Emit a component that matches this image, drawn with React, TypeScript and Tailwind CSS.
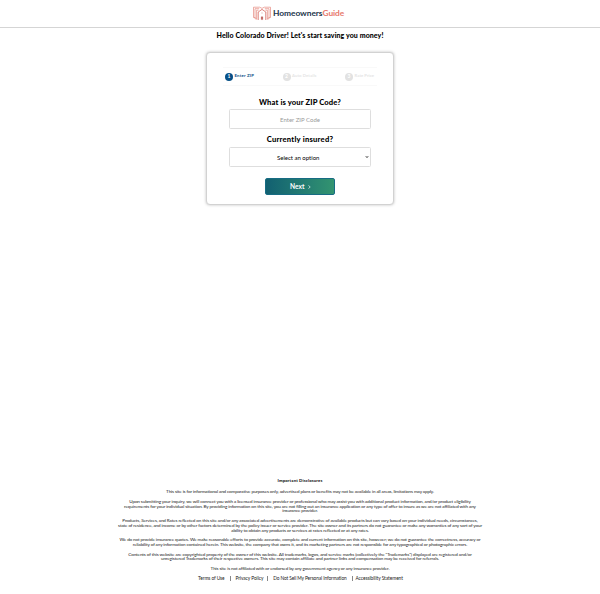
import { useLayoutEffect, useRef, useState } from "react";

// Single line of text tracked so that it fills the given measure.
function Line({ text, width, className = "" }: { text: string; width: number; className?: string }) {
  const ref = useRef<HTMLSpanElement>(null);
  const [spacing, setSpacing] = useState(0);
  useLayoutEffect(() => {
    if (ref.current) {
      const natural = ref.current.getBoundingClientRect().width;
      setSpacing((width - natural) / text.length);
    }
  }, [text, width]);
  return (
    <span ref={ref} className={`inline-block shrink-0 whitespace-nowrap ${className}`} style={{ letterSpacing: spacing }}>
      {text}
    </span>
  );
}

const disclosures: [string, number][][] = [
  [["This site is for informational and comparative purposes only, advertised plans or benefits may not be available in all areas, limitations may apply.", 268]],
  [
    ["Upon submitting your inquiry, we will connect you with a licensed insurance provider or professional who may assist you with additional product information, and/or product eligibility", 341.5],
    ["requirements for your individual situation. By providing information on this site, you are not filling out an insurance application or any type of offer to insure as we are not affiliated with any", 351.5],
    ["insurance provider.", 35.5],
  ],
  [
    ["Products, Services, and Rates reflected on this site and/or any associated advertisements are demonstrative of available products but can vary based on your individual needs, circumstances,", 355.5],
    ["state of residence, and income or by other factors determined by the policy issuer or service provider. The site owner and its partners do not guarantee or make any warranties of any sort of your", 364],
    ["ability to obtain any products or services at rates reflected or at any rates.", 137.5],
  ],
  [
    ["We do not provide insurance quotes. We make reasonable efforts to provide accurate, complete and current information on this site, however; we do not guarantee the correctness, accuracy or", 361],
    ["reliability of any information contained herein. This website, the company that owns it, and its marketing partners are not responsible for any typographical or photographic errors.", 334.5],
  ],
  [
    ["Contents of this website are copyrighted property of the owner of this website. All trademarks, logos, and service marks (collectively the \"Trademarks\") displayed are registered and/or", 343.5],
    ["unregistered Trademarks of their respective owners. This site may contain affiliate and partner links and compensation may be received for referrals.", 278],
  ],
  [["This site is not affiliated with or endorsed by any government agency or any insurance provider.", 178.5]],
];

function Logo() {
  return (
    <svg className="h-[15px] w-[18px] shrink-0" viewBox="0 0 18 15" fill="none" stroke="#e58a80" strokeWidth="0.7">
      <path d="M2.5 11.5H.5V1.2h6.2L9 2.4l2.3-1.2h6.2v10.3h-2" />
      <path d="M3.6 12.8H2V2.7h4.2M14.4 12.8H16V2.7h-4.2" />
      <path d="M3.6 13.5V4.2h2M14.4 13.5V4.2h-2" />
      <path d="M5.2 14V6L9 3.4 12.8 6v8" stroke="#d8756c" strokeWidth=".9" />
      <path d="M8.2 10.8h1.6v2.8H8.2z" fill="#b9534d" stroke="#b9534d" strokeWidth=".3" />
      <path d="M8.5 6.6h1v1h-1z" fill="#dda098" stroke="none" />
    </svg>
  );
}

function Step({ number, label, width, active = false }: { number: number; label: string; width: number; active?: boolean }) {
  return (
    <div className={`flex items-center gap-[1.5px] text-[4.3px] font-bold leading-none ${active ? "text-[#075087]" : "text-[#e5e5e5]"}`}>
      <span className={`flex size-[8px] shrink-0 items-center justify-center rounded-full text-[5px] text-white ${active ? "bg-[#075087]" : "bg-[#e2e2e2]"}`}>
        {number}
      </span>
      <Line text={label} width={width} />
    </div>
  );
}

export default function App() {
  return (
    <div className="flex h-[594px] flex-col overflow-hidden bg-white font-['Lato',sans-serif] text-black">
      <header className="flex h-[28px] shrink-0 items-center justify-center gap-[2px] border-b border-[#d5d5d5] pb-px pr-[3px]">
        <Logo />
        <div className="flex text-[8.4px] font-bold leading-none">
          <Line text="Homeowners" width={49.5} className="text-[#22354a]" />
          <Line text="Guide" width={21.5} className="text-[#e7786c]" />
        </div>
      </header>

      <h1 className="flex h-[24px] shrink-0 justify-center pt-[3px] text-[7px] font-black leading-[9px]">
        <Line text="Hello Colorado Driver! Let's start saving you money!" width={167} />
      </h1>

      <main className="mx-auto flex h-[153px] w-[188px] shrink-0 flex-col items-center rounded-[4px] border border-[#d2d2d2] bg-white shadow-[0_0_3px_rgba(0,0,0,0.25)]">
        <div className="mt-[14px] flex h-[19px] w-[154px] shrink-0 items-center justify-between border-y border-[#f9f9f9] pl-[2px] pr-[3px]">
          <Step number={1} label="Enter ZIP" width={19.5} active />
          <Step number={2} label="Auto Details" width={24.5} />
          <Step number={3} label="Rate Price" width={19.5} />
        </div>

        <label className="mt-[10px] h-[13px] shrink-0 text-[7.6px] font-black leading-[12px]">
          <Line text="What is your ZIP Code?" width={82} />
        </label>
        <div className="flex h-[20px] w-[142px] shrink-0 items-center justify-center rounded-[1.5px] border border-[#dedede] text-[6px] text-[#999999]">
          <Line text="Enter ZIP Code" width={40} />
        </div>

        <label className="mt-[4px] h-[14px] shrink-0 text-[7.6px] font-black leading-[12px]">
          <Line text="Currently insured?" width={66.5} />
        </label>
        <div className="flex h-[20px] w-[142px] shrink-0 items-center rounded-[1.5px] border border-[#dedede] pl-[47px] text-[6px]">
          <Line text="Select an option" width={42.5} />
          <svg className="ml-auto mr-px size-[4px] shrink-0" viewBox="0 0 4 4" fill="none" stroke="#111" strokeWidth=".8">
            <path d="m.8 1.2 1.2 1.4 1.2-1.4" />
          </svg>
        </div>

        <button className="mt-[11px] flex h-[17px] w-[70px] shrink-0 items-center justify-center gap-[3.5px] rounded-[2px] border border-[#176c83] bg-linear-to-r from-[#126071] to-[#339470] pl-px text-[6.6px] font-bold leading-none text-white">
          <Line text="Next" width={14.5} />
          <svg className="h-[4px] w-[3px] shrink-0" viewBox="0 0 3 4" fill="none" stroke="white" strokeWidth=".7">
            <path d="m.6.4 1.6 1.6L.6 3.6" />
          </svg>
        </button>
      </main>

      <footer className="mt-auto flex h-[117px] shrink-0 flex-col items-center text-[4.6px] leading-[4.8px] text-[#222]">
        <h2 className="mt-[2px] flex h-[4.8px] text-[4.3px] font-black">
          <Line text="Important Disclosures" width={45} />
        </h2>
        <div className="mt-[5.5px] flex flex-col gap-[4.8px]">
          {disclosures.map((lines, index) => (
            <p key={index} className="flex flex-col items-center">
              {lines.map(([text, width]) => (
                <Line key={text} text={text} width={width} />
              ))}
            </p>
          ))}
        </div>
        <nav className="mt-[5px] flex h-[5px] items-center pl-px text-[4.8px]">
          <Line text="Terms of Use" width={26.5} />
          <span className="mx-[5px] h-[5px] w-[0.8px] bg-[#888]" />
          <Line text="Privacy Policy" width={28} />
          <span className="ml-[4px] mr-[5px] h-[5px] w-[0.8px] bg-[#888]" />
          <Line text="Do Not Sell My Personal Information" width={73.5} />
          <span className="ml-[5px] mr-[3px] h-[5px] w-[0.8px] bg-[#888]" />
          <Line text="Accessibility Statement" width={47.5} />
        </nav>
      </footer>
    </div>
  );
}
